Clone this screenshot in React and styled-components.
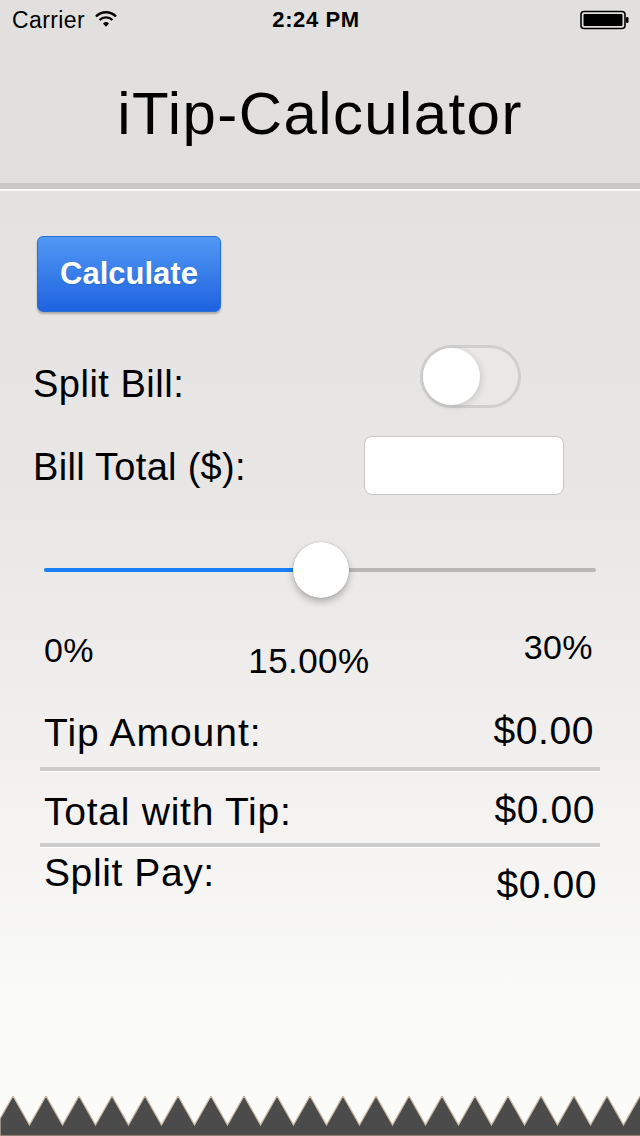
import React from "react";
import styled, { createGlobalStyle } from "styled-components";

const GlobalStyle = createGlobalStyle`
  html, body {
    margin: 0;
    padding: 0;
  }
  body {
    font-family: "Liberation Sans", Arial, sans-serif;
    color: #000;
  }
`;

const WifiIcon = () => (
  <svg width="22" height="18" viewBox="0 0 22 18">
    <path d="M1 6.5 A14 14 0 0 1 21 6.5" fill="none" stroke="#000" strokeWidth="2.4" />
    <path d="M4.6 10 A9 9 0 0 1 17.4 10" fill="none" stroke="#000" strokeWidth="2.4" />
    <path d="M8 13.4 A4.4 4.4 0 0 1 14 13.4 L11 16.8 Z" fill="#000" />
  </svg>
);

const BatteryIcon = () => (
  <svg width="50" height="20" viewBox="0 0 50 20">
    <rect x="1" y="1.5" width="44" height="17" rx="3" fill="none" stroke="#000" strokeWidth="1.6" />
    <rect x="3.5" y="4" width="39" height="12" rx="1" fill="#000" />
    <rect x="46" y="7" width="2.5" height="6" rx="1" fill="#000" />
  </svg>
);

const Zigzag = () => {
  const pts = ["0,40", "0,22"];
  for (let x = -3.5; x < 680; x += 33) {
    pts.push(`${x},29`);
    pts.push(`${x + 16.5},0`);
  }
  pts.push("680,40");
  return (
    <svg width="640" height="40" viewBox="0 0 640 40">
      <polygon points={pts.join(" ")} fill="#4b4b4b" stroke="#c9b9a4" strokeWidth="1.2" strokeLinejoin="miter" />
    </svg>
  );
};

const App = () => {
  return (
    <>
      <GlobalStyle />
      <Page>
        <StatusBar>
          <Carrier>
            Carrier <WifiIcon />
          </Carrier>
          <Clock>2:24 PM</Clock>
          <Battery>
            <BatteryIcon />
          </Battery>
        </StatusBar>
        <Header>
          <Title>iTip-Calculator</Title>
        </Header>
        <HeaderRule />
        <Content>
          <CalcButton>Calculate</CalcButton>
          <FormRow $top={33}>
            <FieldLabel $offset={20} $track={0.5}>Split Bill:</FieldLabel>
            <Toggle $right={119}>
              <Knob />
            </Toggle>
          </FormRow>
          <FormRow $top={28}>
            <FieldLabel $offset={12} $track={0.3}>Bill Total ($):</FieldLabel>
            <TextBox $right={76} />
          </FormRow>
          <Slider>
            <Track>
              <Filled style={{ width: `${(277 / 552) * 100}%` }} />
            </Track>
            <Thumb />
          </Slider>
          <PercentRow>
            <Percent $offset={3}>0%</Percent>
            <Percent $offset={13} $size={35}>15.00%</Percent>
            <Percent $offset={0}>30%</Percent>
          </PercentRow>
          <ResultRow $top={33}>
            <ResultLabel $offset={2} $track={1}>Tip Amount:</ResultLabel>
            <ResultValue $offset={0} $right={46}>$0.00</ResultValue>
          </ResultRow>
          <Divider $top={15} />
          <ResultRow $top={18}>
            <ResultLabel $offset={2} $track={0.75}>Total with Tip:</ResultLabel>
            <ResultValue $offset={0} $right={45}>$0.00</ResultValue>
          </ResultRow>
          <Divider $top={12} />
          <ResultRow $top={5}>
            <ResultLabel $offset={0} $track={0.6}>Split Pay:</ResultLabel>
            <ResultValue $offset={12} $right={43}>$0.00</ResultValue>
          </ResultRow>
        </Content>
        <Footer>
          <Zigzag />
        </Footer>
      </Page>
    </>
  );
};

const Page = styled.div`
  width: 640px;
  height: 1136px;
  display: flex;
  flex-direction: column;
  overflow: hidden;
  background: linear-gradient(
    to bottom,
    #e1e0de 0px,
    #e3e2e0 200px,
    #e8e7e5 500px,
    #f3f2f0 800px,
    #fafaf8 1000px,
    #fbfbf9 1136px
  );
`;

const StatusBar = styled.div`
  height: 40px;
  display: grid;
  grid-template-columns: 1fr auto 1fr;
  align-items: center;
  padding: 0 10px 0 12px;
  font-size: 23px;
`;

const Carrier = styled.div`
  display: flex;
  align-items: center;
  gap: 10px;
  letter-spacing: 0.4px;
  svg {
    margin-top: -2px;
  }
`;

const Clock = styled.div`
  font-weight: bold;
  font-size: 22px;
  letter-spacing: 0.6px;
  margin-left: -10px;
`;

const Battery = styled.div`
  display: flex;
  justify-content: flex-end;
  line-height: 0;
`;

const Header = styled.div`
  height: 143px;
  display: flex;
  align-items: center;
  justify-content: center;
  background: #e1e0de;
`;

const Title = styled.h1`
  margin: 0;
  font-size: 60px;
  font-weight: normal;
  line-height: 60px;
  letter-spacing: 1.4px;
  margin-top: 4px;
`;

const HeaderRule = styled.div`
  height: 6px;
  background: #c9c8c6;
  border-bottom: 2px solid #fafafa;
`;

const Content = styled.div`
  display: flex;
  flex-direction: column;
  position: relative;
`;

const CalcButton = styled.button`
  margin: 45px 0 0 37px;
  width: 184px;
  height: 76px;
  border: 1px solid #2a6fd8;
  border-radius: 6px;
  background: linear-gradient(to bottom, #5099f4, #1e63df);
  box-shadow: 0 2px 2px rgba(0, 0, 0, 0.25);
  color: #fff;
  font-family: "Liberation Sans", Arial, sans-serif;
  font-weight: bold;
  font-size: 31px;
  padding: 0;
  text-shadow: 0 1px 1px rgba(0, 0, 0, 0.15);
`;

const FormRow = styled.div`
  display: flex;
  align-items: flex-start;
  margin-top: ${(p) => p.$top}px;
  padding-left: 33px;
`;

const FieldLabel = styled.div`
  font-size: 38px;
  line-height: 38px;
  letter-spacing: ${(p) => p.$track}px;
  margin-top: ${(p) => p.$offset}px;
`;

const Toggle = styled.div`
  margin-left: auto;
  margin-right: ${(p) => p.$right}px;
  width: 101px;
  height: 63px;
  box-sizing: border-box;
  border: 3px solid #cfcfcf;
  border-radius: 32px;
  background: #e9e8e6;
  display: flex;
  align-items: center;
`;

const Knob = styled.div`
  width: 57px;
  height: 57px;
  border-radius: 50%;
  background: #fff;
  box-shadow: 2px 2px 6px rgba(0, 0, 0, 0.12);
`;

const TextBox = styled.div`
  margin-left: auto;
  margin-right: ${(p) => p.$right}px;
  width: 200px;
  height: 59px;
  box-sizing: border-box;
  background: #fff;
  border: 1px solid #c6c6c6;
  border-radius: 8px;
`;

const Slider = styled.div`
  position: relative;
  margin: 47px 44px 0 44px;
  height: 56px;
  display: flex;
  align-items: center;
`;

const Track = styled.div`
  width: 100%;
  height: 4px;
  border-radius: 2px;
  background: #b7b7b7;
  display: flex;
`;

const Filled = styled.div`
  height: 100%;
  border-radius: 2px;
  background: #1a7ef4;
`;

const Thumb = styled.div`
  position: absolute;
  left: 249px;
  top: 0;
  width: 56px;
  height: 56px;
  border-radius: 50%;
  background: #fff;
  box-shadow: 0 0 1px rgba(0, 0, 0, 0.35), 0 4px 7px rgba(0, 0, 0, 0.25);
`;

const PercentRow = styled.div`
  display: flex;
  justify-content: space-between;
  align-items: flex-start;
  margin-top: 32px;
  padding: 0 47px 0 44px;
`;

const Percent = styled.div`
  font-size: ${(p) => p.$size || 34}px;
  line-height: ${(p) => p.$size || 34}px;
  letter-spacing: 0.4px;
  margin-top: ${(p) => p.$offset}px;
`;

const ResultRow = styled.div`
  display: flex;
  justify-content: space-between;
  align-items: flex-start;
  margin-top: ${(p) => p.$top}px;
  padding-left: 44px;
`;

const ResultLabel = styled.div`
  font-size: 39px;
  line-height: 39px;
  letter-spacing: ${(p) => p.$track}px;
  margin-top: ${(p) => p.$offset}px;
`;

const ResultValue = styled.div`
  font-size: 39px;
  line-height: 39px;
  letter-spacing: 0.6px;
  margin-top: ${(p) => p.$offset}px;
  margin-right: ${(p) => p.$right}px;
`;

const Divider = styled.div`
  margin: ${(p) => p.$top}px 40px 0 40px;
  height: 4px;
  background: #cbcbcb;
  border-bottom: 1px solid #ffffff;
`;

const Footer = styled.div`
  margin-top: auto;
  height: 40px;
  line-height: 0;
`;

export default App;
